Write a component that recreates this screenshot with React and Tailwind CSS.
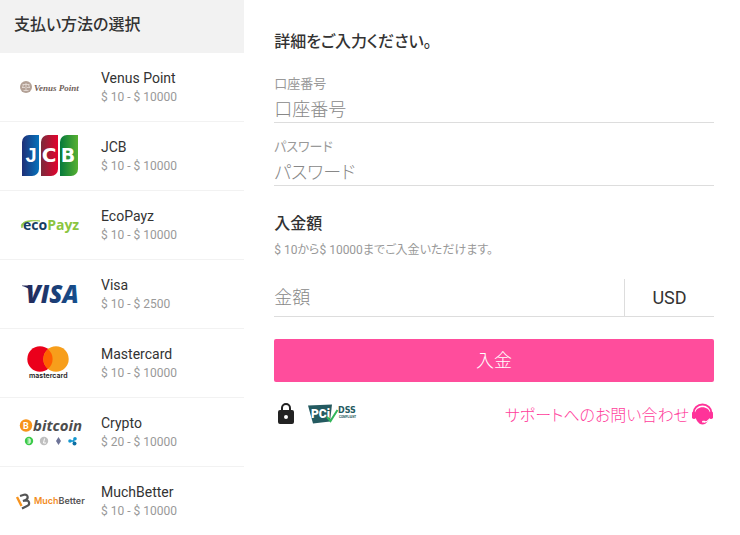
import React from "react";

function VenusLogo() {
  return (
    <svg viewBox="0 0 76 44" className="h-11 w-19" aria-hidden="true">
      <circle cx="12" cy="22" r="6" fill="#b3a196" />
      <path d="M12 18v8M8.500 19.500h7M8 22.500h3M13 22.500h3M9.500 25.500h5M9.500 19.500l-1 3M14.500 19.500l1 3" stroke="#e8e0da" strokeWidth="0.800" fill="none" />
      <text x="20" y="26" fontSize="9" fontWeight="700" fontStyle="italic" fill="#6f6058" className="font-['Z003','URW_Chancery_L','Liberation_Serif',cursive]">Venus Point</text>
    </svg>
  );
}

function JcbLogo() {
  return (
    <svg viewBox="0 0 76 44" className="h-11 w-19" aria-hidden="true">
      <defs>
        <linearGradient id="jcbBlue"><stop offset="0" stopColor="#1f2f77" /><stop offset="1" stopColor="#0672bb" /></linearGradient>
        <linearGradient id="jcbRed"><stop offset="0" stopColor="#7a2a3b" /><stop offset="1" stopColor="#e4032e" /></linearGradient>
        <linearGradient id="jcbGreen"><stop offset="0" stopColor="#067a3c" /><stop offset="1" stopColor="#57b031" /></linearGradient>
      </defs>
      <path d="M15 1h10v34a7 7 0 0 1-7 7H8V8a7 7 0 0 1 7-7z" fill="url(#jcbBlue)" />
      <path d="M34 1h10v34a7 7 0 0 1-7 7H27V8a7 7 0 0 1 7-7z" fill="url(#jcbRed)" />
      <path d="M53 1h11v34a7 7 0 0 1-7 7H46V8a7 7 0 0 1 7-7z" fill="url(#jcbGreen)" />
      <g fontSize="19" fontWeight="700" fill="#fff" textAnchor="middle">
        <text x="17" y="28" fontSize="20" className="font-['Liberation_Sans',sans-serif]">J</text>
        <text x="35" y="28" fontSize="20" className="font-['DejaVu_Sans',sans-serif]">C</text>
        <text x="54" y="28" className="font-['DejaVu_Sans',sans-serif]">B</text>
      </g>
    </svg>
  );
}

function EcoPayzLogo() {
  return (
    <svg viewBox="0 0 76 44" className="h-11 w-19" aria-hidden="true">
      <path d="M8 25c-3-5 4-9 18-7-9-1-17 1-18 7z" fill="#8cc63f" stroke="#8cc63f" strokeWidth="0.700" />
      <text x="9" y="27" fontSize="14" fontWeight="700" fill="#173f63" className="font-['Open_Sans',sans-serif]">eco<tspan fill="#8bc53f">Payz</tspan></text>
    </svg>
  );
}

function VisaLogo() {
  return (
    <svg viewBox="0 0 76 44" className="h-11 w-19" aria-hidden="true">
      <defs><linearGradient id="visaBlue"><stop offset="0" stopColor="#232959" /><stop offset="1" stopColor="#15508f" /></linearGradient></defs>
      <path d="M8 13.500h6c2 0 3 1 3.500 3l1 5c-2-4-5-6-10.500-7.500z" fill="#232959" />
      <text x="12" y="31" fontSize="24" fontWeight="800" fontStyle="italic" fill="url(#visaBlue)" className="font-['Open_Sans',sans-serif]">VISA</text>
    </svg>
  );
}

function MastercardLogo() {
  return (
    <svg viewBox="0 0 76 44" className="h-11 w-19" aria-hidden="true">
      <circle cx="26" cy="18" r="12.700" fill="#eb001b" />
      <circle cx="42" cy="18" r="12.700" fill="#f79e1b" />
      <path d="M34 8.200a12.700 12.700 0 0 1 0 19.600a12.700 12.700 0 0 1 0-19.600z" fill="#ff5f00" />
      <text x="15" y="37" fontSize="7" fontWeight="600" fill="#1b1b1b" className="font-['Inter',sans-serif]">mastercard</text>
    </svg>
  );
}

function CryptoLogo() {
  return (
    <svg viewBox="0 0 76 44" className="h-11 w-19" aria-hidden="true">
      <circle cx="12" cy="15.500" r="6.200" fill="#f7931a" />
      <text x="9" y="19" fontSize="9" fontWeight="700" fill="#fff" className="font-['Roboto',sans-serif]">B</text>
      <text x="19" y="21" fontSize="15" fontWeight="700" fontStyle="italic" fill="#4d4d4d" className="font-['Open_Sans',sans-serif]">bitcoin</text>
      <circle cx="15" cy="31" r="4.200" fill="#3ccb4a" />
      <path d="M13.500 29h2.500v4h-2.500M13.500 31h3" stroke="#fff" fill="none" />
      <circle cx="30" cy="31" r="4.200" fill="#bfbfbf" />
      <path d="M30.500 28.500l-1 4.500h2.500" stroke="#fff" fill="none" />
      <path d="M44.500 27l2.500 4-2.500 4-2.500-4z" fill="#6d7397" />
      <path d="M55 31h4l2-2M59 31l2 2.500" stroke="#1597cf" strokeWidth="1.500" fill="none" />
      <g fill="#1597cf"><circle cx="56" cy="31" r="1.800" /><circle cx="61" cy="28.800" r="1.800" /><circle cx="60.500" cy="33.500" r="2" fill="#0b6fa4" /></g>
    </svg>
  );
}

function MuchBetterLogo() {
  return (
    <svg viewBox="0 0 76 44" className="h-11 w-19" aria-hidden="true">
      <path d="M3 18l4.500 9" stroke="#f7931e" strokeWidth="2.400" fill="none" />
      <path d="M6 17l4-1.200c4-1 5 4 1.500 5.200l-2.500 1 3-.5c4 0 4 4.500 1 5.500l-5 2.500" stroke="#555" strokeWidth="2.200" fill="none" />
      <text x="20" y="25" fontSize="9" fontWeight="600" fill="#f28b1d" className="font-['Inter',sans-serif]">Much<tspan fill="#555">Better</tspan></text>
    </svg>
  );
}

function HeadsetIcon() {
  return (
    <svg viewBox="0 0 24 24" className="size-6" fill="none" aria-hidden="true">
      <path d="M3.500 11a9 8.500 0 0 1 18 0" stroke="#ff3399" strokeWidth="1.800" />
      <rect x="2" y="9.500" width="4" height="7.500" rx="1.800" fill="#ff3399" />
      <rect x="19" y="9.500" width="4" height="7.500" rx="1.800" fill="#ff3399" />
      <path d="M5 11.500C5.500 3 19.500 3 20 11.500c0 6-3.500 11-7.500 11S5 17.500 5 11.500z" fill="#ff3399" />
      <path d="M19 17.500c-1 1.500-3 2.500-5 2.500" stroke="#fff" strokeWidth="1.200" />
      <rect x="12" y="18.800" width="3.500" height="1.800" rx="0.900" fill="#fff" />
    </svg>
  );
}

function PciLogo() {
  return (
    <svg viewBox="0 0 52 24" className="h-6 w-13" aria-hidden="true">
      <path d="M0 3.500l24-1-2 17-17 2z" fill="#245a60" />
      <text x="3" y="16" fontSize="12" fontWeight="900" fill="#fff" className="font-['Roboto',sans-serif]">PCi</text>
      <path d="M19 15l3.500 4 7-11" stroke="#32b65a" strokeWidth="2" fill="none" />
      <text x="30" y="11" fontSize="8" fontWeight="700" fill="#245a60" className="font-['DejaVu_Sans',sans-serif]">DSS</text>
      <text x="31" y="16" fontSize="3" fontWeight="700" fill="#245a60" className="font-['Roboto',sans-serif]">COMPLIANT</text>
    </svg>
  );
}

const methods = [
  { name: "Venus Point", range: "$ 10 - $ 10000", Logo: VenusLogo },
  { name: "JCB", range: "$ 10 - $ 10000", Logo: JcbLogo },
  { name: "EcoPayz", range: "$ 10 - $ 10000", Logo: EcoPayzLogo },
  { name: "Visa", range: "$ 10 - $ 2500", Logo: VisaLogo },
  { name: "Mastercard", range: "$ 10 - $ 10000", Logo: MastercardLogo },
  { name: "Crypto", range: "$ 20 - $ 10000", Logo: CryptoLogo },
  { name: "MuchBetter", range: "$ 10 - $ 10000", Logo: MuchBetterLogo },
];

function Method({ name, range, Logo }) {
  return (
    <li className="border-b border-[#f2f2f2] last:border-b-0">
      <button type="button" className="flex h-17 w-full items-center gap-[11px] pl-3.5 text-left">
        <Logo />
        <span className="flex flex-col gap-px pb-px">
          <span className="text-sm leading-5 text-[#333]">{name}</span>
          <span className="text-xs leading-4 text-[#999]">{range}</span>
        </span>
      </button>
    </li>
  );
}

function Field({ id, label, type }) {
  return (
    <div className="flex flex-col">
      <label htmlFor={id} className="text-[13px] leading-5 text-[#999]">{label}</label>
      <input id={id} type={type} placeholder={label} className="h-[29px] w-full border-b border-[#ddd] pt-0.5 text-lg font-light text-[#333] outline-none placeholder:text-[#888]" />
    </div>
  );
}

export default function App() {
  return (
    <div className="flex min-h-screen bg-white font-['Roboto','Noto_Sans_CJK_JP',sans-serif] [font-feature-settings:'palt']">
      <aside className="w-[33%] shrink-0">
        <h2 className="flex h-[53px] items-center bg-[#f2f2f2] px-3.5 pb-1 text-base font-medium text-[#333]">支払い方法の選択</h2>
        <ul>
          {methods.map((m) => <Method key={m.name} {...m} />)}
        </ul>
      </aside>

      <main className="min-w-0 grow pt-[30px] pr-[26px] pl-[30px]">
        <h1 className="text-base font-medium text-[#333]">詳細をご入力ください。</h1>
        <form className="mt-5" onSubmit={(e) => e.preventDefault()}>
          <div className="flex flex-col gap-3.5">
            <Field id="account" label="口座番号" type="text" />
            <Field id="password" label="パスワード" type="password" />
          </div>

          <h2 className="mt-[26px] text-base font-medium text-[#333]"><label htmlFor="amount">入金額</label></h2>
          <p className="mt-1 text-xs leading-5 text-[#999]">$ 10から$ 10000までご入金いただけます。</p>
          <div className="mt-[19px] flex h-[38px] border-b border-[#ddd]">
            <input id="amount" type="text" placeholder="金額" className="min-w-0 grow text-lg font-light text-[#333] outline-none placeholder:text-[#888]" />
            <span className="flex w-[90px] items-center justify-center border-l border-[#ddd] text-lg text-[#333]">USD</span>
          </div>
          <button type="submit" className="mt-[22px] h-[43px] w-full rounded-xs bg-[#ff4d9c] text-lg font-light text-white">入金</button>
        </form>

        <footer className="mt-[18px] flex items-center justify-between">
          <div className="flex items-center gap-2.5">
            <svg viewBox="0 0 24 24" className="size-6" fill="#222" aria-hidden="true">
              <path d="M18 8h-1V6A5 5 0 0 0 7 6v2H6a2 2 0 0 0-2 2v10a2 2 0 0 0 2 2h12a2 2 0 0 0 2-2V10a2 2 0 0 0-2-2zm-6 9a2 2 0 1 1 0-4 2 2 0 0 1 0 4zM9 8V6a3 3 0 0 1 6 0v2z" />
            </svg>
            <PciLogo />
          </div>
          <a href="#support" className="flex items-center gap-px text-base leading-6 font-light text-[#ff3d9b]">
            <span className="pt-1">サポートへのお問い合わせ</span>
            <HeadsetIcon />
          </a>
        </footer>
      </main>
    </div>
  );
}
